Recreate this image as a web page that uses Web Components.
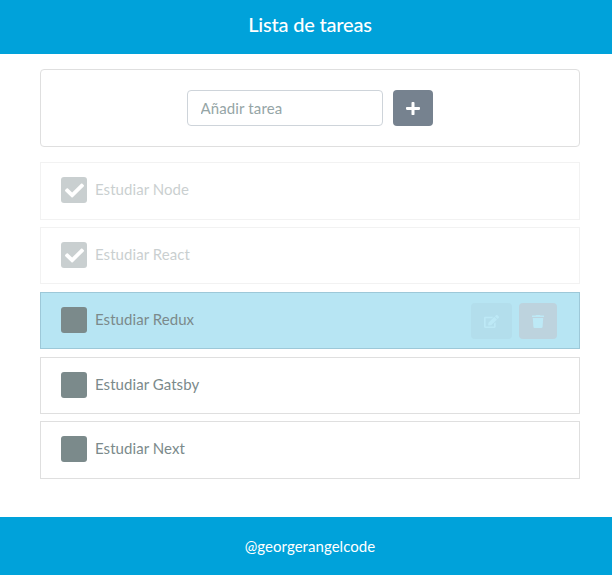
<!DOCTYPE html>
<html lang="es"><head><meta charset="utf-8"><title>Lista de tareas</title>
<style>
*{box-sizing:border-box}
body{margin:0;background:#fff;font-family:Lato,"Liberation Sans",sans-serif;font-size:15px;line-height:22.5px;color:#7b8a8b}
</style></head><body>
<task-app></task-app>
<script>
const ICONS = {
  plus: ['0 0 448 512','M416 208H272V64c0-17.67-14.33-32-32-32h-32c-17.67 0-32 14.33-32 32v144H32c-17.67 0-32 14.33-32 32v32c0 17.67 14.33 32 32 32h144v144c0 17.67 14.33 32 32 32h32c17.67 0 32-14.33 32-32V304h144c17.67 0 32-14.33 32-32v-32c0-17.67-14.33-32-32-32z'],
  check: ['0 0 512 512','M173.898 439.404l-166.4-166.4c-9.997-9.997-9.997-26.206 0-36.204l36.203-36.204c9.997-9.998 26.207-9.998 36.204 0L192 312.69 432.095 72.596c9.997-9.997 26.207-9.997 36.204 0l36.203 36.204c9.997 9.997 9.997 26.206 0 36.204l-294.4 294.401c-9.998 9.997-26.207 9.997-36.204-.001z'],
  edit: ['0 0 576 512','M402.6 83.2l90.2 90.2c3.8 3.8 3.8 10 0 13.8L274.4 405.6l-92.8 10.3c-12.4 1.4-22.9-9.1-21.5-21.5l10.3-92.8L388.8 83.2c3.8-3.8 10-3.8 13.8 0zm162-22.9l-48.8-48.8c-15.2-15.2-39.9-15.2-55.2 0l-35.4 35.4c-3.8 3.8-3.8 10 0 13.8l90.2 90.2c3.8 3.8 10 3.8 13.8 0l35.4-35.4c15.2-15.3 15.2-40 0-55.2zM384 346.2V448H64V128h229.8c3.2 0 6.2-1.3 8.5-3.5l40-40c7.6-7.6 2.2-20.5-8.5-20.5H48C21.5 64 0 85.5 0 112v352c0 26.5 21.5 48 48 48h352c26.5 0 48-21.5 48-48V306.2c0-10.7-12.9-16-20.5-8.5l-40 40c-2.2 2.3-3.5 5.3-3.5 8.5z'],
  trash: ['0 0 12 13','M.3 .4h3.2L4.2 0h3.6l.7 .4h3.2q.3 0 .3 .3v1q0 .3-.3 .3H.3Q0 2 0 1.700V.7Q0 .4 .3 .4zM.8 2.9h10.400l-.6 8.900q-.1 1.200-1.200 1.200H2.600q-1.100 0-1.200-1.200z']
};
const define = (name, html) => customElements.define(name, class extends HTMLElement {
  constructor() {
    super();
    this.attachShadow({mode: 'open'}).innerHTML = '<style>*{box-sizing:border-box}</style>' + html;
  }
});

customElements.define('ui-icon', class extends HTMLElement {
  connectedCallback() {
    if (this.shadowRoot) return;
    const [box, d] = ICONS[this.getAttribute('name')];
    this.attachShadow({mode: 'open'}).innerHTML =
      `<style>:host{display:block;flex:none;width:var(--w,15px);height:var(--h,15px)}svg{display:block;width:100%;height:100%}</style>
       <svg viewBox="${box}" preserveAspectRatio="none" fill="currentColor" aria-hidden="true"><path d="${d}"/></svg>`;
  }
});

define('page-bar', `<style>
:host{display:flex;align-items:center;justify-content:center;background:#00a2da;color:#fff;padding-left:8px;flex:none}
</style><slot></slot>`);

define('task-form', `<style>
:host{display:flex;align-items:center;justify-content:center;gap:10px;height:78px;border:1px solid #dfdfdf;border-radius:4px}
input{width:196px;height:36px;padding:0 12px 0 12.5px;border:1px solid #ced4da;border-radius:4px;font:15px Lato,sans-serif;letter-spacing:.13px;color:#7b8a8b;background:#fff;outline:0}
input::placeholder{color:#95a5a6;opacity:1}
button{display:grid;place-items:center;width:40px;height:36px;padding:0;border:0;border-radius:4px;background:#76828f;color:#fff;--w:14px;--h:15px}
</style><input placeholder="Añadir tarea" aria-label="Añadir tarea"><button aria-label="Añadir"><ui-icon name="plus"></ui-icon></button>`);

define('task-item', `<style>
:host{display:flex;align-items:flex-start;border:1px solid #dfdfdf;padding:10px 22px 0 20px;background:#fff}
:host([done]){opacity:.4}
:host([active]){background:#b7e5f3;border-color:#9dc8d8}
.box{display:grid;place-items:center;width:26px;height:26px;margin-top:4px;border-radius:3px;background:#7b8a8b;color:#fff;--w:19px;--h:19px}
.box ui-icon{visibility:hidden}
:host([done]) .box ui-icon{visibility:visible}
.label{margin:5px 0 0 8px;flex:1;letter-spacing:.06px}
.actions{display:none;gap:7px}
:host([active]) .actions{display:flex}
button{display:grid;place-items:center;height:36px;padding:0;border:0;border-radius:4px;color:#bde9f6}
.edit{width:41px;background:#b3deec;--w:15px;--h:13px;color:#bde9f6}
.del{width:38px;background:#bdd3de;--w:12px;--h:13px}
</style>
<div class="box"><ui-icon name="check"></ui-icon></div>
<div class="label"><slot></slot></div>
<div class="actions"><button class="edit" aria-label="Editar"><ui-icon name="edit"></ui-icon></button><button class="del" aria-label="Eliminar"><ui-icon name="trash"></ui-icon></button></div>`);

define('task-list', `<style>
:host{display:grid;grid-template-rows:65px 65px 65px 64px 58px}
::slotted(*){height:57px}
::slotted(:first-child),::slotted(:last-child){height:58px}
</style><slot></slot>`);

define('task-app', `<style>
:host{display:flex;flex-direction:column;height:575px}
.top{height:54px;font-size:20px;font-weight:500;letter-spacing:-.2px;padding-bottom:5px}
.bottom{height:58px;padding-top:1px;letter-spacing:.05px}
main{flex:1;padding:15px 32px 0 40px;display:flex;flex-direction:column;gap:15px}
</style>
<page-bar class="top">Lista de tareas</page-bar>
<main><task-form></task-form>
<task-list><task-item done>Estudiar Node</task-item><task-item done>Estudiar React</task-item><task-item active>Estudiar Redux</task-item><task-item>Estudiar Gatsby</task-item><task-item>Estudiar Next</task-item></task-list></main>
<page-bar class="bottom">@georgerangelcode</page-bar>`);
</script></body></html>
